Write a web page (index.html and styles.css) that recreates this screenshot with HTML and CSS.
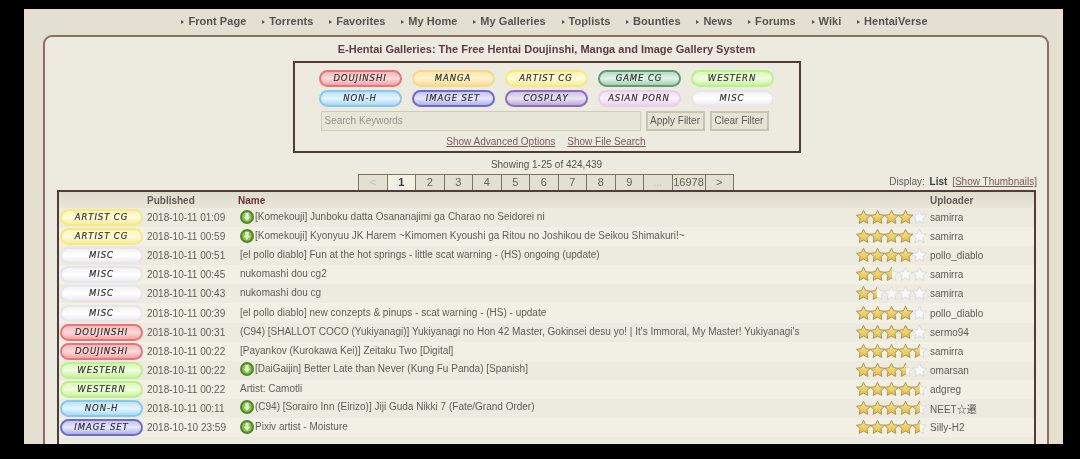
FILE: index.html
```html
<!DOCTYPE html>
<html lang="en">
<head>
<meta charset="utf-8">
<title>E-Hentai Galleries</title>
<link rel="stylesheet" href="styles.css">
</head>
<body>
<svg class="defs" width="0" height="0" aria-hidden="true">
  <defs>
    <linearGradient id="gold" x1="0" y1="0" x2="0" y2="1"><stop offset="0" stop-color="#f8e79c"/><stop offset="1" stop-color="#e6bd3c"/></linearGradient>
    <path id="star" d="M7.500 .3l2.100 4.400 4.900.6-3.600 3.300.9 4.800-4.300-2.400-4.300 2.400.9-4.800L.5 5.300l4.900-.6z"/>
    <g id="stars-full" fill="url(#gold)" stroke="#a8904a" stroke-width=".9">
      <use href="#star"/><use href="#star" x="14"/><use href="#star" x="28"/><use href="#star" x="42"/><use href="#star" x="56"/>
    </g>
    <g id="stars-empty" fill="#f8f8f6" stroke="#d6d8de" stroke-width=".9">
      <use href="#star"/><use href="#star" x="14"/><use href="#star" x="28"/><use href="#star" x="42"/><use href="#star" x="56"/>
    </g>
    <g id="dl">
      <circle cx="7" cy="7" r="7" fill="#4f8a2a"/>
      <circle cx="7" cy="7" r="4.800" fill="#8fc255"/>
      <path d="M5.300 2.800h3.400v4h1.600L7 11 3.700 6.800h1.600z" fill="#dff0c8"/>
    </g>
  </defs>
</svg>
<div class="page">
  <nav class="nav">
    <a>Front Page</a><a>Torrents</a><a>Favorites</a><a>My Home</a><a>My Galleries</a><a>Toplists</a><a>Bounties</a><a>News</a><a>Forums</a><a>Wiki</a><a>HentaiVerse</a>
  </nav>
  <main class="panel">
    <h1 class="title">E-Hentai Galleries: The Free Hentai Doujinshi, Manga and Image Gallery System</h1>
    <section class="search">
      <div class="cats">
        <span class="pill doujinshi">DOUJINSHI</span>
        <span class="pill manga">MANGA</span>
        <span class="pill artist">ARTIST CG</span>
        <span class="pill game">GAME CG</span>
        <span class="pill western">WESTERN</span>
        <span class="pill nonh">NON-H</span>
        <span class="pill imageset">IMAGE SET</span>
        <span class="pill cosplay">COSPLAY</span>
        <span class="pill asian">ASIAN PORN</span>
        <span class="pill misc">MISC</span>
      </div>
      <div class="query">
        <input class="field" type="text" placeholder="Search Keywords">
        <button class="btn" type="button">Apply Filter</button>
        <button class="btn" type="button">Clear Filter</button>
      </div>
      <div class="links"><a>Show Advanced Options</a><a>Show File Search</a></div>
    </section>
    <p class="count">Showing 1-25 of 424,439</p>
    <div class="pagerow">
      <div class="pager">
        <span class="off">&lt;</span><span class="cur">1</span><span>2</span><span>3</span><span>4</span><span>5</span><span>6</span><span>7</span><span>8</span><span>9</span><span class="off">...</span><span class="wide">16978</span><span>&gt;</span>
      </div>
      <div class="display">Display: <b>List</b> <a>[Show Thumbnails]</a></div>
    </div>
    <table class="list">
      <thead><tr><th></th><th>Published</th><th>Name</th><th></th><th>Uploader</th></tr></thead>
      <tbody>
        <tr><td><span class="pill artist">ARTIST CG</span></td><td>2018-10-11 01:09</td><td class="name"><svg class="dl"><use href="#dl"/></svg>[Komekouji] Junboku datta Osananajimi ga Charao no Seidorei ni</td><td><span class="rate"><svg><use href="#stars-empty"/></svg><span class="fill" style="width:80%"><svg><use href="#stars-full"/></svg></span></span></td><td>samirra</td></tr>
        <tr><td><span class="pill artist">ARTIST CG</span></td><td>2018-10-11 00:59</td><td class="name"><svg class="dl"><use href="#dl"/></svg>[Komekouji] Kyonyuu JK Harem ~Kimomen Kyoushi ga Ritou no Joshikou de Seikou Shimakuri!~</td><td><span class="rate"><svg><use href="#stars-empty"/></svg><span class="fill" style="width:80%"><svg><use href="#stars-full"/></svg></span></span></td><td>samirra</td></tr>
        <tr><td><span class="pill misc">MISC</span></td><td>2018-10-11 00:51</td><td class="name">[el pollo diablo] Fun at the hot springs - little scat warning - (HS) ongoing (update)</td><td><span class="rate"><svg><use href="#stars-empty"/></svg><span class="fill" style="width:80%"><svg><use href="#stars-full"/></svg></span></span></td><td>pollo_diablo</td></tr>
        <tr><td><span class="pill misc">MISC</span></td><td>2018-10-11 00:45</td><td class="name">nukomashi dou cg2</td><td><span class="rate"><svg><use href="#stars-empty"/></svg><span class="fill" style="width:50%"><svg><use href="#stars-full"/></svg></span></span></td><td>samirra</td></tr>
        <tr><td><span class="pill misc">MISC</span></td><td>2018-10-11 00:43</td><td class="name">nukomashi dou cg</td><td><span class="rate"><svg><use href="#stars-empty"/></svg><span class="fill" style="width:30%"><svg><use href="#stars-full"/></svg></span></span></td><td>samirra</td></tr>
        <tr><td><span class="pill misc">MISC</span></td><td>2018-10-11 00:39</td><td class="name">[el pollo diablo] new conzepts &amp; pinups - scat warning - (HS) - update</td><td><span class="rate"><svg><use href="#stars-empty"/></svg><span class="fill" style="width:80%"><svg><use href="#stars-full"/></svg></span></span></td><td>pollo_diablo</td></tr>
        <tr><td><span class="pill doujinshi">DOUJINSHI</span></td><td>2018-10-11 00:31</td><td class="name">(C94) [SHALLOT COCO (Yukiyanagi)] Yukiyanagi no Hon 42 Master, Gokinsei desu yo! | It's Immoral, My Master! Yukiyanagi's</td><td><span class="rate"><svg><use href="#stars-empty"/></svg><span class="fill" style="width:80%"><svg><use href="#stars-full"/></svg></span></span></td><td>sermo94</td></tr>
        <tr><td><span class="pill doujinshi">DOUJINSHI</span></td><td>2018-10-11 00:22</td><td class="name">[Payankov (Kurokawa Kei)] Zeitaku Two [Digital]</td><td><span class="rate"><svg><use href="#stars-empty"/></svg><span class="fill" style="width:90%"><svg><use href="#stars-full"/></svg></span></span></td><td>samirra</td></tr>
        <tr><td><span class="pill western">WESTERN</span></td><td>2018-10-11 00:22</td><td class="name"><svg class="dl"><use href="#dl"/></svg>[DaiGaijin] Better Late than Never (Kung Fu Panda) [Spanish]</td><td><span class="rate"><svg><use href="#stars-empty"/></svg><span class="fill" style="width:70%"><svg><use href="#stars-full"/></svg></span></span></td><td>omarsan</td></tr>
        <tr><td><span class="pill western">WESTERN</span></td><td>2018-10-11 00:22</td><td class="name">Artist: Camotli</td><td><span class="rate"><svg><use href="#stars-empty"/></svg><span class="fill" style="width:90%"><svg><use href="#stars-full"/></svg></span></span></td><td>adgreg</td></tr>
        <tr><td><span class="pill nonh">NON-H</span></td><td>2018-10-11 00:11</td><td class="name"><svg class="dl"><use href="#dl"/></svg>(C94) [Sorairo Inn (Eirizo)] Jiji Guda Nikki 7 (Fate/Grand Order)</td><td><span class="rate"><svg><use href="#stars-empty"/></svg><span class="fill" style="width:90%"><svg><use href="#stars-full"/></svg></span></span></td><td>NEET☆遷</td></tr>
        <tr><td><span class="pill imageset">IMAGE SET</span></td><td>2018-10-10 23:59</td><td class="name"><svg class="dl"><use href="#dl"/></svg>Pixiv artist - Moisture</td><td><span class="rate"><svg><use href="#stars-empty"/></svg><span class="fill" style="width:90%"><svg><use href="#stars-full"/></svg></span></span></td><td>Silly-H2</td></tr>
        <tr class="rest"><td colspan="5"></td></tr>
      </tbody>
    </table>
  </main>
</div>
</body>
</html>
```
FILE: styles.css
```css
* { box-sizing: border-box; }
html, body { margin: 0; height: 100%; }
body {
  background: #000;
  padding: 9px 17px 15px 24px;
  overflow: hidden;
  font-family: "Liberation Sans", Arial, "Noto Sans CJK SC", sans-serif;
  font-size: 10px;
  color: #5f5c56;
}
.defs { position: absolute; }
.page {
  height: 435px;
  overflow: hidden;
  background: #e3e0d1;
  filter: blur(.6px);
}

.nav {
  display: flex;
  justify-content: center;
  gap: 15.800px;
  height: 24px;
  margin-bottom: 2px;
  padding-left: 22px;
  align-items: center;
  font-size: 11px;
  font-weight: bold;
  letter-spacing: .05px;
  color: #55534f;
}
.nav a::before {
  content: "";
  display: inline-block;
  border-left: 3px solid #55534f;
  border-top: 2.500px solid transparent;
  border-bottom: 2.500px solid transparent;
  margin-right: 4px;
  vertical-align: 1px;
}

.panel {
  margin: 0 14px 0 19px;
  height: 440px;
  padding: 5px 11px 0 12px;
  background: #edebdf;
  border: 2px solid #8a6f68;
  border-bottom: 0;
  border-radius: 9px 9px 0 0;
}
.title {
  margin: 0;
  height: 18px;
  line-height: 14px;
  text-align: center;
  font-size: 11px;
  font-weight: bold;
  color: #5f3a40;
}

.search {
  width: 508px;
  height: 92px;
  margin: 1px auto 0;
  padding: 7px 25px 0 24px;
  border: 2px solid #4f3d3a;
}
.cats {
  display: grid;
  grid-template-columns: repeat(5, 83px);
  column-gap: 10px;
  row-gap: 3px;
}
.pill {
  display: block;
  width: 83px;
  height: 17px;
  line-height: 12px;
  text-align: center;
  border: 2.500px solid;
  border-radius: 9px;
  font-family: "DejaVu Sans", sans-serif;
  font-size: 8.500px;
  font-style: italic;
  letter-spacing: .9px;
  color: #2c2c2c;
  -webkit-text-stroke: .15px #2c2c2c;
  white-space: nowrap;
}
.doujinshi { border-color: #e8757c; background: linear-gradient(#f3b8b8, #fbdada 50%, #f2a5a8); }
.manga { border-color: #f5d98e; background: linear-gradient(#fbe6a8, #fdf3d0 50%, #f8dd94); }
.artist { border-color: #f5e985; background: linear-gradient(#fbf3ad, #fffbe0 50%, #f8ec98); }
.game { border-color: #5f9e78; background: linear-gradient(#b8dcc4, #e0f2e6 50%, #a4d0b2); }
.western { border-color: #bdf08c; background: linear-gradient(#d8f8b8, #f0fde0 50%, #c8f4a0); }
.nonh { border-color: #88c8f0; background: linear-gradient(#bce2f8, #e4f5fd 50%, #a8daf6); }
.imageset { border-color: #6c6cd0; background: linear-gradient(#c4c4f0, #e8e8fb 50%, #b0b0ea); }
.cosplay { border-color: #8f6cbc; background: linear-gradient(#cfc0e6, #ebe4f5 50%, #bda8dc); }
.asian { border-color: #ebcdf0; background: linear-gradient(#f2def5, #fbf2fc 50%, #ecd2f0); }
.misc { border-color: #e6e6ea; background: linear-gradient(#f2f2f4, #fff 50%, #ececf0); }

.query {
  display: flex;
  gap: 5px;
  margin-top: 4px;
  padding-left: 2px;
}
.field {
  width: 320px;
  height: 20px;
  padding: 0 3px 2px;
  font: 10px "Liberation Sans", Arial, sans-serif;
  background: #e8e6d6;
  border: 1px solid #cfccbc;
  color: #5f5c56;
}
.field::placeholder { color: #97958c; opacity: 1; }
.btn {
  width: 59px;
  height: 20px;
  padding: 0 0 2px;
  font: 10px "Liberation Sans", Arial, sans-serif;
  color: #5f5c56;
  background: #e6e3d4;
  border: 2px solid #c8c4b4;
}
.links {
  display: flex;
  justify-content: center;
  gap: 12px;
  margin-top: 4px;
  line-height: 13px;
  color: #7b5a5a;
}
.links a, .display a { text-decoration: underline; }

.count {
  margin: 5px 0 0;
  height: 14px;
  line-height: 14px;
  text-align: center;
  color: #55534f;
}
.pagerow {
  display: grid;
  grid-template-columns: 1fr auto 1fr;
  align-items: end;
  height: 17px;
  margin-top: 1px;
}
.pager {
  grid-column: 2;
  display: flex;
  height: 16px;
}
.pager span {
  width: 29.500px;
  margin-left: -1px;
  height: 16px;
  line-height: 15px;
  text-align: center;
  font-size: 11px;
  color: #66635c;
  background: #e3e0d1;
  border: 1px solid #7d7465;
  border-bottom: 0;
}
.pager .wide { width: 34px; }
.pager .off { color: #c6c3b6; }
.pager .cur { background: #f2f0e4; font-weight: bold; color: #3f3d39; }
.display {
  grid-column: 3;
  justify-self: end;
  align-self: center;
  margin-right: -1px;
  white-space: nowrap;
  word-spacing: 2px;
}
.display b { color: #3f3d39; font-weight: bold; }
.display a { color: #7b5a5a; word-spacing: 0; }

.list {
  width: 979px;
  border-collapse: collapse;
  table-layout: fixed;
  background: #f2f0e4;
  border: 2px solid #4f3d3a;
  border-bottom: 0;
}
.list th, .list td {
  padding: 0;
  text-align: left;
  white-space: nowrap;
  overflow: hidden;
}
.list th:nth-child(1) { width: 89px; }
.list th:nth-child(2) { width: 91px; }
.list th:nth-child(3) { width: 618px; }
.list th:nth-child(4) { width: 74px; }
.list thead tr { height: 17px; background: linear-gradient(#dedbcc, #e8e6d8); }
.list th { font-weight: bold; font-size: 10px; color: #5f5c56; }
.list th:nth-child(3) { color: #6b2f38; }
.list tbody tr { height: 19.100px; }
.list tbody tr:nth-child(odd) { background: #edebdf; }
.list td:first-child { padding-left: 1px; }
.list .name { padding: 0 0 2px 2px; }
.list .rest { height: 30px; }
.dl {
  width: 14px;
  height: 14px;
  vertical-align: -4px;
  margin-right: 1px;
}
.rate {
  position: relative;
  display: block;
  width: 71px;
  height: 15px;
}
.rate svg { display: block; width: 71px; height: 15px; }
.fill {
  position: absolute;
  left: 0;
  top: 0;
  height: 15px;
  overflow: hidden;
}
```
